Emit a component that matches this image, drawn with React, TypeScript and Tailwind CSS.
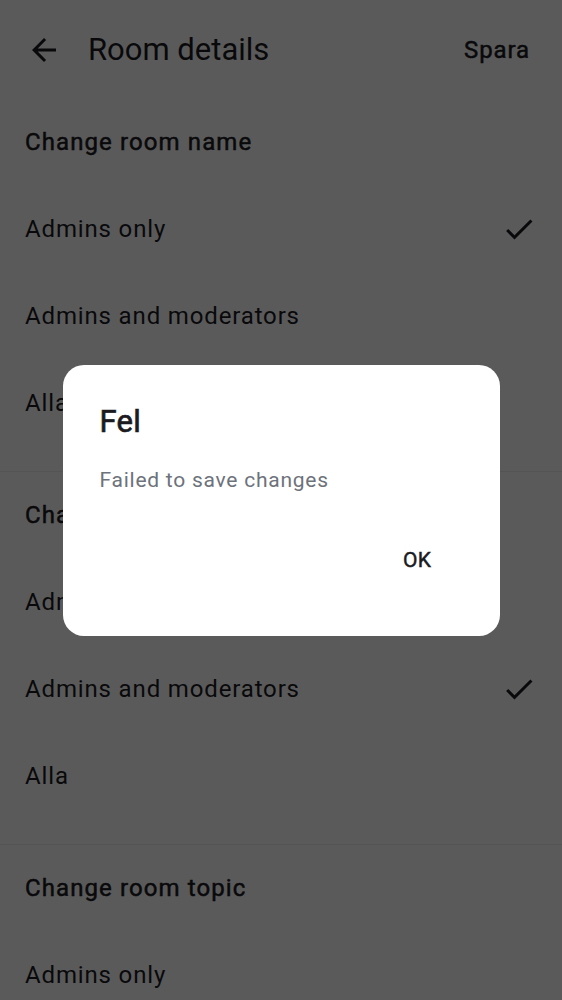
import React from "react";

const font = { fontFamily: "Roboto, 'Noto Sans', Arial, sans-serif" };

function Check() {
  return (
    <svg width="36" height="36" viewBox="0 0 24 24" fill="#1c1b1f">
      <path d="M9 16.17L4.83 12l-1.42 1.41L9 19 21 7l-1.41-1.41z" />
    </svg>
  );
}

function Row({ label, checked }: { label: string; checked?: boolean }) {
  return (
    <div className="flex h-[87px] items-center justify-between pl-[25px] pr-[25px]">
      <span className="text-[24px] leading-[32px] tracking-[0.85px] text-[#1c1b1f]">{label}</span>
      {checked && <Check />}
    </div>
  );
}

function Section({ title, selected, last }: { title: string; selected: number; last?: boolean }) {
  const opts = ["Admins only", "Admins and moderators", "Alla"];
  return (
    <div className={last ? "" : "border-b border-[#eeeeee] pb-[25px]"}>
      <div className="flex h-[86px] items-center pl-[25px]">
        <span className="text-[24px] font-normal leading-[32px] tracking-[1.1px] text-[#1c1b1f] [-webkit-text-stroke:0.5px_#1c1b1f]">
          {title}
        </span>
      </div>
      {opts.map((o, i) => (
        <Row key={o} label={o} checked={i === selected} />
      ))}
    </div>
  );
}

export default function App() {
  return (
    <div style={font} className="relative h-[1000px] w-full overflow-hidden bg-white">
      <div className="flex h-[99px] items-center pl-[26px] pr-[32px]">
        <svg width="36" height="36" viewBox="0 0 24 24" fill="#1c1b1f">
          <path d="M20 11H7.83l5.59-5.59L12 4l-8 8 8 8 1.41-1.41L7.83 13H20v-2z" />
        </svg>
        <span className="ml-[26px] flex-1 text-[31px] leading-[40px] text-[#1c1b1f]">Room details</span>
        <span className="text-[24px] font-normal leading-[32px] tracking-[0.9px] text-[#1c1b1f] [-webkit-text-stroke:0.5px_#1c1b1f]">
          Spara
        </span>
      </div>
      <Section title="Change room name" selected={0} />
      <Section title="Change room avatar" selected={1} />
      <Section title="Change room topic" selected={1} last />

      <div className="absolute inset-0 flex items-center justify-center bg-black/[0.647]">
        <div className="w-[437px] rounded-[21px] bg-white pb-[51px] pl-[37px] pr-[52px] pt-[37px]">
          <div className="text-[31px] font-normal leading-[40px] tracking-[0.3px] text-[#1b1b1f] [-webkit-text-stroke:0.7px_#1b1b1f]">
            Fel
          </div>
          <div className="mt-[24px] text-[21px] leading-[28px] tracking-[0.75px] text-[#6d727b]">
            Failed to save changes
          </div>
          <div className="mt-[43px] flex justify-end">
            <button className="h-[48px] px-[16px] text-[21px] font-normal tracking-[0.5px] text-[#1b1b1f] [-webkit-text-stroke:0.45px_#1b1b1f]">
              OK
            </button>
          </div>
        </div>
      </div>
    </div>
  );
}
